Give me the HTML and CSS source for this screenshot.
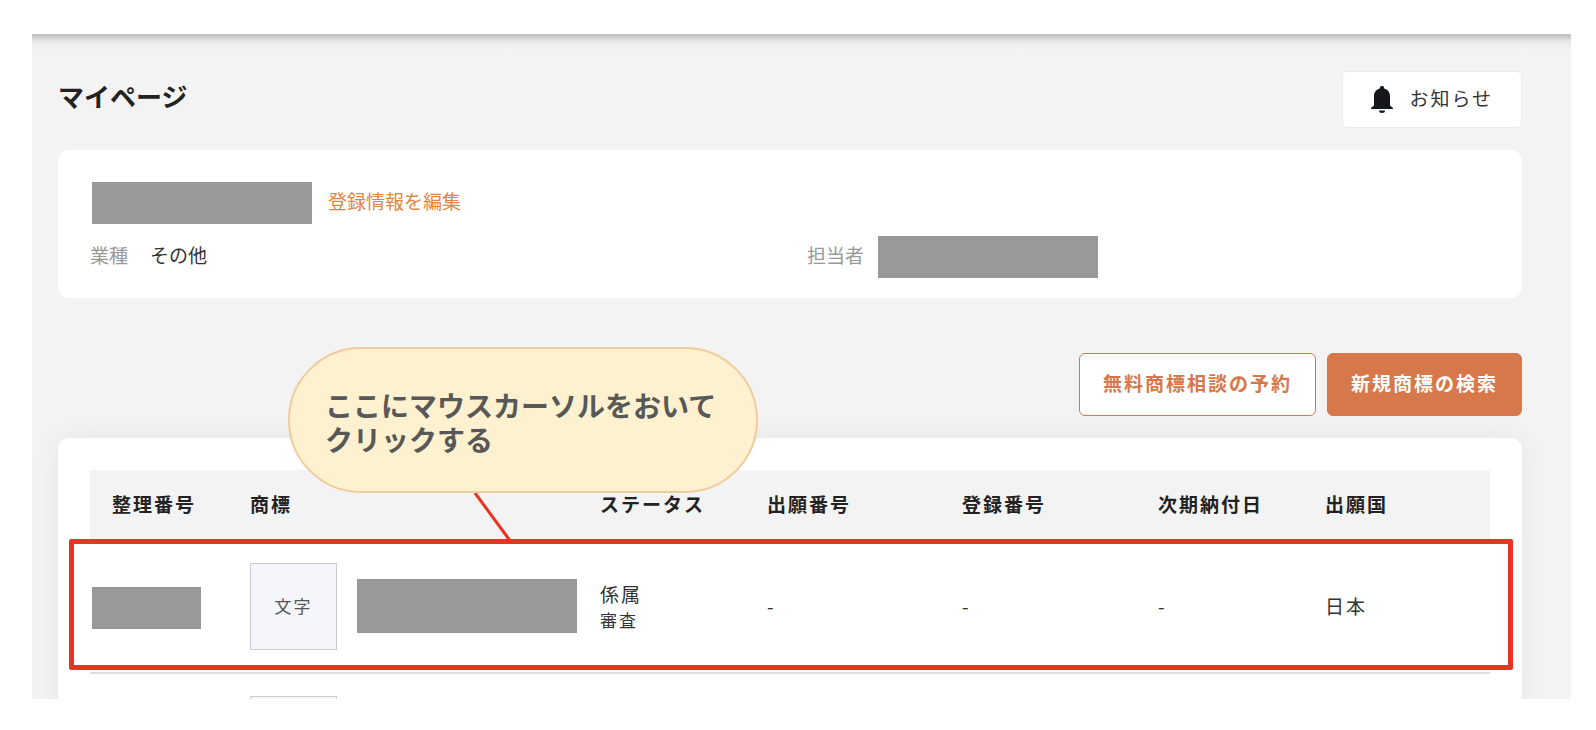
FILE: index.html
```html
<!DOCTYPE html>
<html lang="ja">
<head>
  <meta charset="UTF-8" />
  <meta name="viewport" content="width=device-width, initial-scale=1" />
  <title>マイページ</title>
  <link rel="stylesheet" href="styles.css">
</head>
<body>

  <main class="page">
    <header class="page-header">
      <h1>マイページ</h1>
      <button type="button" class="btn-notice">
        <svg width="22" height="27" viewBox="0 0 22 27" aria-hidden="true">
          <path fill="#14181b" d="M11 0a2.200 2.200 0 0 0-2.200 2.400C5.300 3.400 3 6.300 3 10v9.500L0 22v1h22v-1l-3-2.500V10c0-3.700-2.300-6.600-5.800-7.600A2.200 2.200 0 0 0 11 0z"/>
          <path fill="#14181b" d="M8 24.500h6a3 2.500 0 0 1-6 0z"/>
        </svg>
        <span>お知らせ</span>
      </button>
    </header>

    <section class="card profile">
      <div class="profile-name">
        <span class="mask"></span>
        <a href="#">登録情報を編集</a>
      </div>
      <dl class="profile-info">
        <div>
          <dt>業種</dt>
          <dd>その他</dd>
        </div>
        <div>
          <dt>担当者</dt>
          <dd><span class="mask"></span></dd>
        </div>
      </dl>
    </section>

    <div class="actions">
      <button type="button" class="btn btn-outline">無料商標相談の予約</button>
      <button type="button" class="btn btn-primary">新規商標の検索</button>
    </div>

    <section class="card list">
      <table>
        <colgroup>
          <col class="col-ref">
          <col class="col-mark">
          <col class="col-status">
          <col class="col-app">
          <col class="col-reg">
          <col class="col-due">
          <col class="col-country">
        </colgroup>
        <thead>
          <tr>
            <th>整理番号</th>
            <th>商標</th>
            <th>ステータス</th>
            <th>出願番号</th>
            <th>登録番号</th>
            <th>次期納付日</th>
            <th>出願国</th>
          </tr>
        </thead>
        <tbody>
          <tr class="highlight">
            <td><span class="mask mask-small"></span></td>
            <td>
              <div class="mark">
                <span class="thumb">文字</span>
                <span class="mask mask-tall"></span>
              </div>
            </td>
            <td>係属<small>審査</small></td>
            <td>-</td>
            <td>-</td>
            <td>-</td>
            <td>日本</td>
          </tr>
          <tr>
            <td></td>
            <td><div class="mark"><span class="thumb"></span></div></td>
            <td></td>
            <td></td>
            <td></td>
            <td></td>
            <td></td>
          </tr>
        </tbody>
      </table>

      <!-- 操作説明の吹き出し -->
      <div class="callout">
        <p>ここにマウスカーソルをおいて<br>クリックする</p>
        <svg class="callout-line" width="40" height="50" viewBox="0 0 40 50" aria-hidden="true">
          <path d="M2 0L38 49" stroke="#ea3323" stroke-width="3"/>
        </svg>
      </div>
    </section>
  </main>

</body>
</html>
```
FILE: styles.css
```css
* {
  box-sizing: border-box;
}
body {
  margin: 0;
  padding: 34px 25px 31px 32px;
  height: 100vh;
  background: #fff;
  color: #333;
  font-family: "Noto Sans CJK JP", "Noto Sans", sans-serif;
  font-size: 19px;
  line-height: 28px;
}
button {
  font-family: inherit;
  font-size: inherit;
  line-height: inherit;
  letter-spacing: 2px;
  cursor: pointer;
}
.page {
  height: 100%;
  padding: 37px 49px 0 26px;
  overflow: hidden;
  background: linear-gradient(#bdbdbd, #d4d4d4 4px, #e8e8e8 8px, #f0f0f0 12px, #f3f3f3 16px);
}
.page-header {
  display: flex;
  justify-content: space-between;
  align-items: flex-start;
  margin-bottom: 22px;
}
h1 {
  margin: 7px 0 0;
  font-size: 26px;
  line-height: 36px;
  color: #222;
}
.btn-notice {
  display: flex;
  align-items: center;
  gap: 16px;
  height: 57px;
  padding: 0 28px 3px;
  border: 1px solid #ebebeb;
  border-radius: 5px;
  background: #fff;
  color: #333;
}
.btn-notice svg {
  margin-top: 3px;
}
.card {
  border-radius: 11px;
  background: #fff;
}
.mask {
  display: block;
  width: 220px;
  height: 42px;
  background: #999;
}
.mask-small {
  width: 109px;
  margin-top: 4px;
}
.mask-tall {
  height: 54px;
}

/* profile */
.profile {
  padding: 32px 32px 20px;
}
.profile-name {
  display: flex;
  gap: 16px;
  padding-left: 2px;
  margin-bottom: 12px;
}
.profile-name a {
  line-height: 38px;
  color: #e08543;
  text-decoration: none;
}
.profile-info {
  display: grid;
  grid-template-columns: 1fr 1fr;
  gap: 34px;
  margin: 0;
  line-height: 38px;
}
.profile-info div {
  display: flex;
}
.profile-info dt {
  color: #999;
}
.profile-info dd {
  margin-left: 22px;
}
.profile-info .mask {
  margin-left: -8px;
}

/* buttons */
.actions {
  display: flex;
  justify-content: flex-end;
  gap: 11px;
  margin: 55px 0 22px;
}
.btn {
  height: 63px;
  padding: 0 23px 3px;
  border: 1px solid #d6784a;
  border-radius: 6px;
  font-weight: 700;
}
.btn-outline {
  background: #fff;
  color: #d6784a;
}
.btn-primary {
  background: #d6784a;
  color: #fff;
}

/* list */
.list {
  position: relative;
  padding: 32px;
  box-shadow: 0 0 28px rgba(0, 0, 0, 0.06);
}
table {
  width: 100%;
  table-layout: fixed;
  border-collapse: collapse;
  letter-spacing: 2px;
}
.col-ref { width: 138px; }
.col-mark { width: 350px; }
.col-status { width: 167px; }
.col-app { width: 195px; }
.col-reg { width: 196px; }
.col-due { width: 167px; }
.col-country { width: 187px; }
th {
  height: 70px;
  padding: 0 0 2px 22px;
  background: #f3f3f3;
  color: #222;
  text-align: left;
  white-space: nowrap;
}
td {
  height: 133px;
  padding: 0 0 0 22px;
  border-bottom: 2px solid #dcdcdc;
}
td:first-child {
  padding-left: 2px;
}
td small {
  display: block;
  font-size: 17px;
  line-height: 24px;
}
.mark {
  display: flex;
  align-items: center;
  gap: 20px;
}
.thumb {
  width: 87px;
  height: 87px;
  border: 1px solid #ccc;
  background: #f4f6fb;
  color: #555;
  font-size: 17px;
  line-height: 83px;
  text-align: center;
}
.highlight {
  position: relative;
}
.highlight::after {
  content: "";
  position: absolute;
  inset: -1px -23px 3px -21px;
  border: 5px solid #ea3323;
  border-radius: 2px;
}

.callout {
  position: absolute;
  top: -91px;
  left: 230px;
  width: 470px;
  height: 146px;
  padding: 39px 35px;
  border: 2px solid #f2cb9b;
  border-radius: 75px;
  background: #fdf1cf;
}
.callout p {
  margin: 0;
  color: #585858;
  font-size: 28px;
  font-weight: 700;
  line-height: 34px;
  white-space: nowrap;
}
.callout-line {
  position: absolute;
  top: 144px;
  left: 183px;
}
```
